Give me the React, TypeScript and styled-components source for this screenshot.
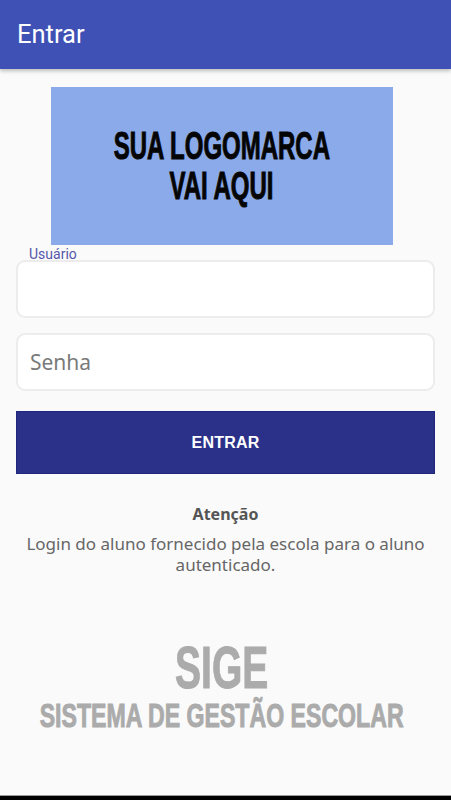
import React, { useState } from 'react';
import styled, { createGlobalStyle } from 'styled-components';

const GlobalStyle = createGlobalStyle`
  html, body {
    margin: 0;
    padding: 0;
    background: #fafafa;
  }
  * {
    box-sizing: border-box;
  }
`;

const Screen = styled.div`
  width: 451px;
  height: 800px;
  display: flex;
  flex-direction: column;
  background: #fafafa;
  font-family: Roboto, "Noto Sans", sans-serif;
  overflow: hidden;
`;

const AppBar = styled.header`
  height: 69px;
  flex-shrink: 0;
  display: flex;
  align-items: center;
  padding: 0 17px 2px;
  background: #3f51b5;
  color: #ffffff;
  font-size: 25.5px;
  box-shadow: 0 2px 4px rgba(0, 0, 0, 0.25);
  position: relative;
  z-index: 1;
`;

const Content = styled.main`
  flex: 1;
  display: flex;
  flex-direction: column;
  padding: 18px 16px 0;
`;

const LogoBox = styled.div`
  width: 342px;
  height: 158px;
  margin-left: 35px;
  background: #8aaae9;
  display: flex;
  flex-direction: column;
  align-items: center;
  justify-content: center;
  padding-bottom: 2px;
`;

// heavy condensed lettering used by the logo placeholder and the SIGE mark
const HeavyText = styled.span<{ size: number; squeeze: number; color: string }>`
  display: inline-block;
  font-family: "Liberation Sans", Arial, sans-serif;
  font-weight: 700;
  font-size: ${p => p.size}px;
  line-height: 1;
  color: ${p => p.color};
  -webkit-text-stroke: 1px ${p => p.color};
  transform: scaleX(${p => p.squeeze});
  white-space: nowrap;
`;

const LogoLine = styled.div`
  height: 40px;
  display: flex;
  align-items: center;
  justify-content: center;
`;

const FieldLabel = styled.label`
  margin: 2px 0 0 13px;
  font-size: 14px;
  line-height: 15px;
  color: #5557aa;
`;

const Field = styled.input<{ gap: number }>`
  width: 100%;
  height: 58px;
  margin-top: ${p => p.gap}px;
  padding: 0 12px;
  background: #ffffff;
  border: 2px solid #ececec;
  border-radius: 9px;
  font-family: "Noto Sans", "Open Sans", sans-serif;
  font-size: 21px;
  color: #333;
  outline: none;
  &::placeholder {
    color: #7a7a7a;
  }
`;

const SubmitButton = styled.button`
  width: 100%;
  height: 63px;
  margin-top: 20px;
  border: 1px solid #1f2680;
  background: #2b3189;
  color: #ffffff;
  font-family: "Liberation Sans", Arial, sans-serif;
  font-weight: 700;
  font-size: 16px;
  letter-spacing: 0.2px;
  cursor: pointer;
`;

const Notice = styled.section`
  margin-top: 30px;
  display: flex;
  flex-direction: column;
  align-items: center;
  text-align: center;
  font-family: "Noto Sans", "Open Sans", sans-serif;
`;

const NoticeTitle = styled.h4`
  margin: 0;
  font-size: 16px;
  line-height: 20px;
  font-weight: 700;
  color: #555555;
`;

const NoticeText = styled.p`
  margin: 9px 0 0;
  padding: 0;
  font-size: 17px;
  line-height: 21px;
  color: #666666;
`;

const Brand = styled.div`
  margin-top: 63px;
  padding-right: 8px;
  display: flex;
  flex-direction: column;
  align-items: center;
`;

const BrandLine = styled.div<{ height: number }>`
  height: ${p => p.height}px;
  display: flex;
  align-items: center;
  justify-content: center;
`;

const NavEdge = styled.div`
  height: 5px;
  flex-shrink: 0;
  background: #000000;
  border-top: 1px solid #9a9a9a;
`;

const App = () => {
  const [user, setUser] = useState('');
  const [password, setPassword] = useState('');

  return (
    <>
      <GlobalStyle />
      <Screen>
        <AppBar>Entrar</AppBar>
        <Content>
          <LogoBox>
            <LogoLine>
              <HeavyText size={39} squeeze={0.615} color="#050505">SUA LOGOMARCA</HeavyText>
            </LogoLine>
            <LogoLine>
              <HeavyText size={39} squeeze={0.615} color="#050505">VAI AQUI</HeavyText>
            </LogoLine>
          </LogoBox>
          <FieldLabel htmlFor="usuario">Usuário</FieldLabel>
          <Field id="usuario" gap={-2} value={user} onChange={e => setUser(e.target.value)} />
          <Field
            gap={15}
            type="password"
            placeholder="Senha"
            value={password}
            onChange={e => setPassword(e.target.value)}
          />
          <SubmitButton>ENTRAR</SubmitButton>
          <Notice>
            <NoticeTitle>Atenção</NoticeTitle>
            <NoticeText>Login do aluno fornecido pela escola para o aluno autenticado.</NoticeText>
          </Notice>
          <Brand>
            <BrandLine height={60}>
              <HeavyText size={60} squeeze={0.65} color="#ababab">SIGE</HeavyText>
            </BrandLine>
            <BrandLine height={34}>
              <HeavyText size={34} squeeze={0.68} color="#ababab">SISTEMA DE GESTÃO ESCOLAR</HeavyText>
            </BrandLine>
          </Brand>
        </Content>
        <NavEdge />
      </Screen>
    </>
  );
};

export default App;
